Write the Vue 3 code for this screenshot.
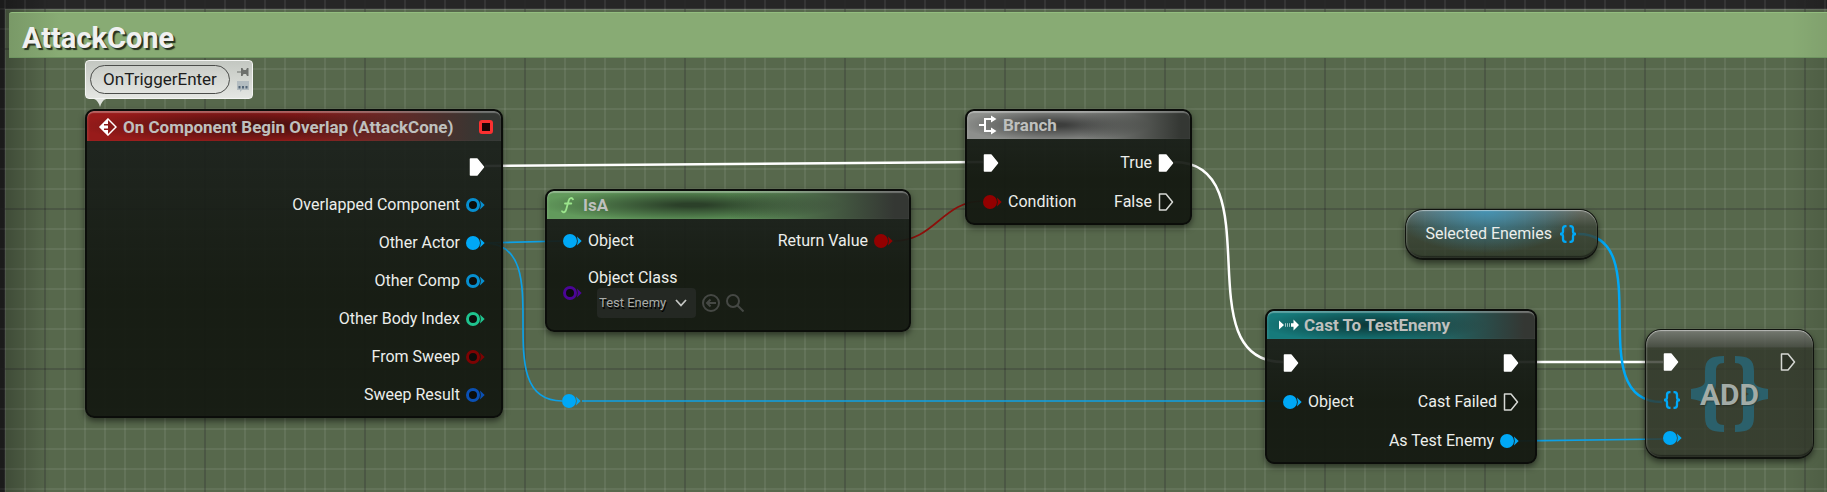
<script setup>
import { ref, h } from 'vue'

const comment = ref('OnTriggerEnter')
const objectClass = ref('Test Enemy')

const overlapPins = [
  { kind: 'exec', color: 'white', linked: true },
  { kind: 'data', label: 'Overlapped Component', color: 'sky' },
  { kind: 'data', label: 'Other Actor', color: 'blue', linked: true },
  { kind: 'data', label: 'Other Comp', color: 'sky' },
  { kind: 'data', label: 'Other Body Index', color: 'mint' },
  { kind: 'data', label: 'From Sweep', color: 'maroon' },
  { kind: 'data', label: 'Sweep Result', color: 'navy' },
]

const palette = {
  white: '#ffffff',
  blue: '#00a8f6',
  sky: '#078fd0',
  mint: '#1fc38e',
  red: '#930000',
  maroon: '#7c0303',
  navy: '#0a50b4',
  violet: '#4b0596',
}

const Pin = (props) => {
  const color = palette[props.color]
  if (props.kind === 'exec') {
    return h('svg', { width: 16, height: 18, viewBox: '0 0 16 18', 'aria-hidden': 'true' }, [
      h('path', {
        d: 'M1.5 1H8L14.5 9L8 17H1.5Z',
        fill: props.linked ? '#fff' : 'rgba(10,12,10,.3)',
        stroke: props.linked ? '#fff' : '#d6d8d4',
        'stroke-width': 1.5,
        'stroke-linejoin': 'round',
      }),
    ])
  }
  if (props.kind === 'set') {
    return h('svg', { width: 18, height: 18, viewBox: '0 0 18 18', 'aria-hidden': 'true' }, [
      h('path', {
        d: 'M7.5 1.2H6.5C4.5 1.2 4 2.2 4 4V6.5C4 8.2 3 9 1 9C3 9 4 9.8 4 11.5V14C4 15.8 4.5 16.8 6.5 16.8H7.5M10.5 1.2H11.5C13.5 1.2 14 2.2 14 4V6.5C14 8.2 15 9 17 9C15 9 14 9.8 14 11.5V14C14 15.8 13.5 16.8 11.5 16.8H10.5',
        fill: 'none',
        stroke: color,
        'stroke-width': 2.3,
      }),
    ])
  }
  return h('svg', { width: 19, height: 14, viewBox: '0 0 19 14', 'aria-hidden': 'true' }, [
    h('path', { d: 'M14 2.5L18.7 7L14 11.5Q15.5 7 14 2.5Z', fill: color }),
    h('circle', {
      cx: 7,
      cy: 7,
      r: 5.5,
      fill: props.linked ? color : '#0b0d0b',
      stroke: color,
      'stroke-width': 3,
    }),
  ])
}
Pin.props = { kind: String, color: String, linked: Boolean }
</script>

<template>
  <main class="graph">
    <section class="frame">
      <h1 class="frame-title">AttackCone</h1>
    </section>
    <div class="grid"></div>
    <div class="vignette"></div>

    <svg class="wires" aria-hidden="true">
      <g class="exec-wire">
        <path d="M485 166L983 162" />
        <path d="M1174 162C1274 162 1183 362 1283 362" />
        <path d="M1519 362H1663" />
      </g>
      <g class="object-wire">
        <path d="M484 243L563 241" />
        <path d="M484 243C562 243 484 401 562 401" />
        <path d="M582 401H1283" />
        <path d="M1518 441L1663 439" />
      </g>
      <path class="set-wire" d="M1578 234C1660 234 1579 402 1662 402" />
      <path class="bool-wire" d="M894 241C935 241 942 201 983 201" />
    </svg>

    <div class="knot"><Pin kind="data" color="blue" linked /></div>

    <div class="bubble">
      <input v-model="comment" class="bubble-text" type="text" aria-label="Node comment" />
      <div class="bubble-tools">
        <button type="button" aria-label="Pin comment bubble">
          <svg width="12" height="10" viewBox="0 0 12 10">
            <path d="M0 4.5H4V1H5.5L6.5 3H9L10 1H11.5V9H10L9 7H6.5L5.5 9H4V5.5H0Z" fill="#6d706c" />
          </svg>
        </button>
        <button type="button" aria-label="Toggle comment bubble">
          <svg width="12" height="11" viewBox="0 0 12 11">
            <path d="M0 0H12V9H5L3 11V9H0Z" fill="#b3bcc0" />
            <path d="M1.5 5H3.5V7.5H1.5ZM5 5H7V7.5H5ZM8.5 5H10.5V7.5H8.5Z" fill="#536577" />
          </svg>
        </button>
      </div>
      <svg class="bubble-tail" width="12" height="8" viewBox="0 0 12 8" aria-hidden="true">
        <path d="M0 0H12C9 1 7 4 6 8C5 4 3 1 0 0Z" fill="#dfe2dd" />
      </svg>
    </div>

    <article class="node event">
      <header class="node-head">
        <svg width="18" height="18" viewBox="0 0 18 18" aria-hidden="true">
          <path d="M9 1L17 9L9 17L1 9Z" fill="none" stroke="#fff" stroke-width="1.5" />
          <path d="M9 .5V6H5V7.5H9V10.5H5V12H9V17.5L.5 9Z" fill="#fff" />
        </svg>
        <h2>On Component Begin Overlap (AttackCone)</h2>
        <i class="delegate"></i>
      </header>
      <div class="pins">
        <ul class="out">
          <li v-for="(pin, i) in overlapPins" :key="i">
            <span v-if="pin.label">{{ pin.label }}</span>
            <Pin :kind="pin.kind" :color="pin.color" :linked="pin.linked" />
          </li>
        </ul>
      </div>
    </article>

    <article class="node isa">
      <header class="node-head">
        <svg width="18" height="18" viewBox="0 0 18 18" aria-hidden="true">
          <path
            d="M14 3.3C13 1.3 10.5 1.5 9.7 4.5L7.2 13.5C6.5 16.3 4.3 17 3 15.3M6 7.5H12.3"
            fill="none"
            stroke="#9be58c"
            stroke-width="1.8"
            stroke-linecap="round"
          />
        </svg>
        <h2>IsA</h2>
      </header>
      <div class="pins">
        <ul>
          <li><Pin kind="data" color="blue" linked /><span>Object</span></li>
          <li class="class-row">
            <Pin kind="data" color="violet" />
            <div>
              <label for="object-class">Object Class</label>
              <div class="class-picker">
                <div class="select">
                  <select id="object-class" v-model="objectClass">
                    <option>Test Enemy</option>
                  </select>
                  <svg width="12" height="8" viewBox="0 0 12 8" aria-hidden="true">
                    <path d="M1 1L6 6.5L11 1" fill="none" stroke="#c4c6c3" stroke-width="1.8" />
                  </svg>
                </div>
                <button type="button" aria-label="Use selected asset">
                  <svg width="18" height="18" viewBox="0 0 18 18">
                    <circle cx="9" cy="9" r="8" />
                    <path d="M14 9H5M8.5 5.5L5 9L8.5 12.5" />
                  </svg>
                </button>
                <button type="button" aria-label="Browse to asset">
                  <svg width="18" height="18" viewBox="0 0 18 18">
                    <circle cx="7" cy="7" r="6" />
                    <path d="M11.5 11.5L17.5 17.5" />
                  </svg>
                </button>
              </div>
            </div>
          </li>
        </ul>
        <ul class="out">
          <li><span>Return Value</span><Pin kind="data" color="red" linked /></li>
        </ul>
      </div>
    </article>

    <article class="node branch">
      <header class="node-head">
        <svg width="18" height="20" viewBox="0 0 18 20" aria-hidden="true">
          <path d="M0 10H6M13 4H6V16H13" fill="none" stroke="#fff" stroke-width="2" />
          <path d="M12 .5L17.5 4L12 7.5ZM12 12.5L17.5 16L12 19.5Z" fill="#fff" />
        </svg>
        <h2>Branch</h2>
      </header>
      <div class="pins">
        <ul>
          <li><Pin kind="exec" color="white" linked /></li>
          <li><Pin kind="data" color="red" linked /><span>Condition</span></li>
        </ul>
        <ul class="out">
          <li><span>True</span><Pin kind="exec" color="white" linked /></li>
          <li><span>False</span><Pin kind="exec" color="white" /></li>
        </ul>
      </div>
    </article>

    <article class="node cast">
      <header class="node-head">
        <svg width="20" height="12" viewBox="0 0 20 12" aria-hidden="true">
          <path d="M0 1.5L5 6L0 10.5ZM12 4.2H14.5V.5L20 6L14.5 11.5V7.8H12Z" fill="#fff" />
          <path d="M6.5 4.2V7.8M8.5 4.2V7.8M10.5 4.2V7.8" stroke="#9cc3c3" />
        </svg>
        <h2>Cast To TestEnemy</h2>
      </header>
      <div class="pins">
        <ul>
          <li><Pin kind="exec" color="white" linked /></li>
          <li><Pin kind="data" color="blue" linked /><span>Object</span></li>
        </ul>
        <ul class="out">
          <li><Pin kind="exec" color="white" linked /></li>
          <li><span>Cast Failed</span><Pin kind="exec" color="white" /></li>
          <li><span>As Test Enemy</span><Pin kind="data" color="blue" linked /></li>
        </ul>
      </div>
    </article>

    <article class="glass variable">
      <span>Selected Enemies</span>
      <Pin kind="set" color="blue" />
    </article>

    <article class="glass add">
      <svg class="braces" width="77" height="78" viewBox="0 0 77 78" aria-hidden="true">
        <path
          id="brace"
          d="M33 1C20 1 14 4 14 16V26C14 31 8 33 0 34V44C8 45 14 47 14 52V62C14 74 20 77 33 77V70C27 70 25 67 25 62V51C25 44 24 41 19 39C24 37 25 34 25 27V16C25 11 27 8 33 8Z"
        />
        <use href="#brace" transform="matrix(-1 0 0 1 77 0)" />
      </svg>
      <h2>ADD</h2>
      <div class="pins">
        <ul>
          <li><Pin kind="exec" color="white" linked /></li>
          <li><Pin kind="set" color="blue" /></li>
          <li><Pin kind="data" color="blue" linked /></li>
        </ul>
        <ul class="out">
          <li><Pin kind="exec" color="white" /></li>
        </ul>
      </div>
    </article>
  </main>
</template>

<style>
body {
  margin: 0;
  background: #262626;
}
</style>

<style scoped>
.graph {
  position: relative;
  box-sizing: border-box;
  min-height: 100vh;
  padding: 9px 0 0 5px;
  overflow: hidden;
  display: flex;
  background: #262626;
  color: #eceeeb;
  font: 16px/20px Roboto, sans-serif;
}

.frame {
  flex: 1;
  background: #57684c;
  border-top: 1px solid #5f6c58;
  border-left: 1px solid #5f6c58;
}

.frame-title {
  position: relative;
  z-index: 1;
  box-sizing: border-box;
  margin: 2px 0 0 3px;
  padding: 7px 13px 1px;
  border-top: 1px solid #93bd7f;
  border-bottom: 1px solid #6f9561;
  border-radius: 3px 0 0 0;
  background:
    linear-gradient(270deg, rgba(0, 0, 0, .06), transparent 36px),
    linear-gradient(90deg, #799967, #88ab74 50px);
  color: #f0f0f0;
  font-size: 29px;
  line-height: 36px;
  font-weight: 700;
  text-shadow: 2px 2px 1px #26301f;
}

.grid,
.vignette,
.wires {
  position: absolute;
  inset: 0;
  pointer-events: none;
}

.grid {
  background-image:
    linear-gradient(90deg, rgba(0, 0, 0, .24) 2px, transparent 2px),
    linear-gradient(rgba(0, 0, 0, .24) 2px, transparent 2px),
    linear-gradient(90deg, rgba(255, 255, 255, .07) 2px, transparent 2px),
    linear-gradient(rgba(255, 255, 255, .07) 2px, transparent 2px);
  background-size: 160px 160px, 160px 160px, 20px 20px, 20px 20px;
  background-position: 44px 0, 0 48px, 4px 0, 0 8px;
}

.vignette {
  background:
    linear-gradient(90deg, rgba(0, 0, 0, .3), transparent 50px),
    linear-gradient(270deg, rgba(0, 0, 0, .1), transparent 36px);
}

.wires {
  width: 100%;
  height: 100%;
  fill: none;
}

.exec-wire {
  stroke: #fff;
  stroke-width: 2.5;
}

.object-wire {
  stroke: #0da0e6;
  stroke-width: 1.7;
}

.set-wire {
  stroke: #00a8f6;
  stroke-width: 2.5;
}

.bool-wire {
  stroke: #8c0e0a;
  stroke-width: 1.7;
}

.knot {
  position: absolute;
  left: 562px;
  top: 394px;
  display: flex;
}

button {
  display: flex;
  margin: 0;
  padding: 0;
  border: 0;
  background: none;
}

h2 {
  margin: 0;
  font-size: 17px;
  line-height: 20px;
  font-weight: 700;
}

/* Comment bubble */
.bubble {
  position: absolute;
  left: 85px;
  top: 60px;
  display: flex;
  align-items: center;
  gap: 7px;
  padding: 4px 3px 4px 4px;
  border: 1px solid #f4f5f3;
  border-radius: 4px;
  background: linear-gradient(#c3c7c1, #e4e6e2);
}

.bubble-text {
  box-sizing: border-box;
  width: 140px;
  height: 29px;
  padding: 0 8px 1px;
  border: 1px solid #4b4d4a;
  border-radius: 15px;
  background: linear-gradient(#cbcec9, #e2e4e0);
  color: #1c1c1c;
  font: 17px/20px Roboto, sans-serif;
  text-align: center;
}

.bubble-tools {
  display: grid;
  gap: 4px;
}

.bubble-tail {
  position: absolute;
  left: 8px;
  top: 38px;
}

/* Nodes */
.node {
  position: absolute;
  box-sizing: border-box;
  overflow: hidden;
  border: 2px solid #0b0d0a;
  border-radius: 9px;
  background: linear-gradient(rgba(27, 32, 29, .9), rgba(20, 25, 17, .95) 60%);
  box-shadow: 0 3px 6px rgba(0, 0, 0, .5);
}

.event {
  left: 85px;
  top: 109px;
  width: 418px;
  --tint: #981b1a;
  --shade: #47100f;
}

.isa {
  left: 545px;
  top: 189px;
  width: 366px;
  --tint: #629a5c;
  --shade: #2b4029;
}

.branch {
  left: 965px;
  top: 109px;
  width: 227px;
  --tint: #8d8f8c;
  --shade: #3d3e3d;
}

.cast {
  left: 1265px;
  top: 309px;
  width: 272px;
  --tint: #167a7b;
  --shade: #0d3b3b;
}

.node-head {
  display: flex;
  align-items: center;
  gap: 6px;
  height: 28px;
  padding: 0 8px 0 12px;
  border-radius: 6px 6px 0 0;
  background:
    linear-gradient(90deg, transparent 50%, #343733 96%),
    radial-gradient(ellipse 42% 60% at 40% 50%, var(--shade) 10%, transparent),
    var(--tint);
  box-shadow: inset 0 2px 1px rgba(255, 255, 255, .3), inset 2px 0 2px rgba(255, 255, 255, .08);
  color: #bfc0be;
}

.event .node-head {
  box-sizing: border-box;
  height: 30px;
  padding-top: 2px;
}

.cast .node-head {
  gap: 5px;
}

.delegate {
  box-sizing: border-box;
  width: 14px;
  height: 14px;
  margin-left: auto;
  border: 3px solid #fb3030;
  border-radius: 3px;
  background: #1d0505;
}

.pins {
  display: flex;
  justify-content: space-between;
  padding: 4px 16px 2px;
}

.event .pins {
  justify-content: flex-end;
  padding: 7px 16px 2px;
}

.isa .pins {
  padding: 3px 16px 4px;
}

ul {
  margin: 0;
  padding: 0;
  list-style: none;
}

li {
  display: flex;
  align-items: center;
  gap: 6px;
  height: 39px;
  white-space: nowrap;
}

.event li,
.isa li {
  height: 38px;
}

.out li {
  justify-content: flex-end;
}

.isa .class-row {
  height: 66px;
}

.class-row label {
  display: block;
}

.class-picker {
  display: flex;
  align-items: center;
  gap: 6px;
  margin-left: 9px;
}

.class-picker button svg {
  fill: none;
  stroke: #454844;
  stroke-width: 2;
}

.select {
  display: grid;
  align-items: center;
  width: 99px;
}

.select > * {
  grid-area: 1 / 1;
}

.select svg {
  justify-self: end;
  margin-right: 9px;
  pointer-events: none;
}

select {
  box-sizing: border-box;
  width: 100%;
  height: 30px;
  padding: 0 2px;
  border: 0;
  border-radius: 4px;
  appearance: none;
  background: #242823;
  color: #a9aba8;
  font: 13px/20px Roboto, sans-serif;
  text-shadow: 1px 2px 0 #000;
}

/* Translucent compact nodes */
.glass {
  position: absolute;
  box-sizing: border-box;
  border: 1px solid #10130e;
  border-bottom-width: 2px;
  box-shadow:
    inset 0 1px 1px rgba(255, 255, 255, .45),
    inset 1px 0 2px rgba(255, 255, 255, .2),
    inset 0 -2px 1px rgba(0, 0, 0, .4),
    0 3px 6px rgba(0, 0, 0, .5);
}

.variable {
  left: 1405px;
  top: 209px;
  width: 193px;
  height: 51px;
  display: flex;
  align-items: center;
  justify-content: flex-end;
  gap: 7px;
  padding-right: 20px;
  border-radius: 18px;
  background:
    radial-gradient(ellipse 50% 90% at 42% 0, rgba(61, 158, 201, .8), transparent),
    linear-gradient(rgba(110, 112, 108, .8), rgba(58, 66, 54, .8) 35%, rgba(44, 53, 38, .8));
}

.add {
  left: 1645px;
  top: 329px;
  width: 169px;
  border-radius: 16px;
  background: linear-gradient(rgba(125, 126, 123, .8), rgba(70, 73, 66, .8) 17px, rgba(48, 53, 41, .8) 18px, rgba(48, 53, 41, .8));
}

.add .pins {
  padding: 14px 17px 1px;
}

.add ul {
  display: grid;
  align-content: start;
  gap: 2px;
}

.add li {
  height: 36px;
}

.braces {
  position: absolute;
  left: 45px;
  top: 25px;
  fill: #2b606b;
}

.add h2 {
  position: absolute;
  inset: 48px 0 auto;
  color: #a3aca7;
  font-size: 30px;
  line-height: 34px;
  text-align: center;
  text-shadow: 1px 1px 1px rgba(30, 35, 30, .5);
}
</style>
